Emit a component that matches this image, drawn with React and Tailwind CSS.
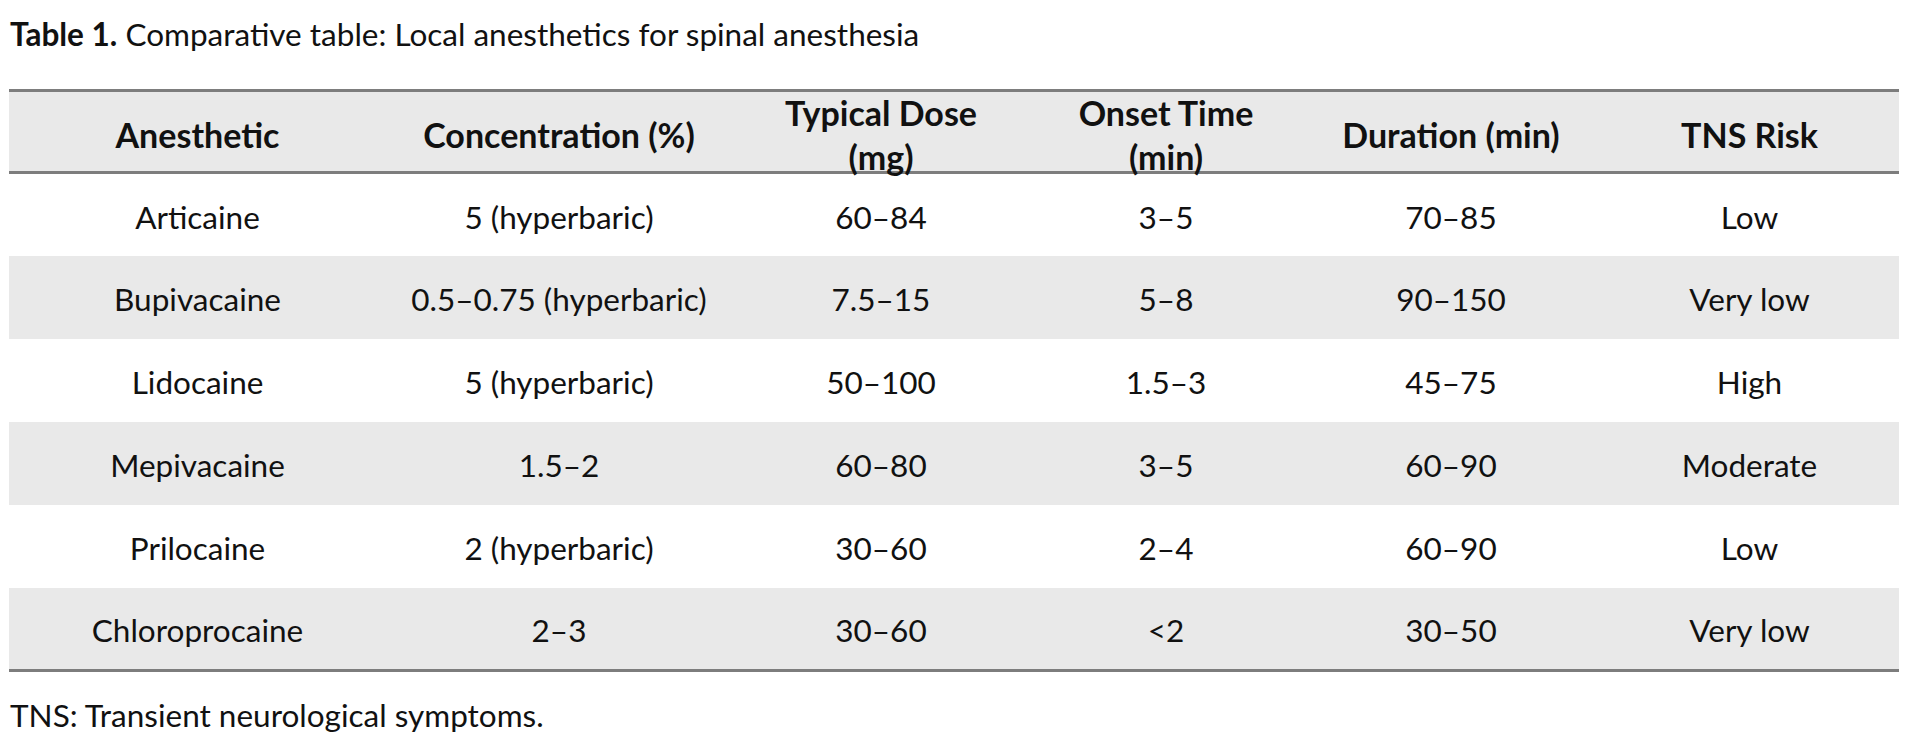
import React from "react";

const columns = [
	{ label: ["Anesthetic"], width: "w-[377px]" },
	{ label: ["Concentration (%)"], width: "w-[346px]" },
	{ label: ["Typical Dose", "(mg)"], width: "w-[298px]" },
	{ label: ["Onset Time", "(min)"], width: "w-[272px]" },
	{ label: ["Duration (min)"], width: "w-[298px]" },
	{ label: ["TNS Risk"], width: "w-[299px]" },
];

const rows = [
	["Articaine", "5 (hyperbaric)", "60–84", "3–5", "70–85", "Low"],
	["Bupivacaine", "0.5–0.75 (hyperbaric)", "7.5–15", "5–8", "90–150", "Very low"],
	["Lidocaine", "5 (hyperbaric)", "50–100", "1.5–3", "45–75", "High"],
	["Mepivacaine", "1.5–2", "60–80", "3–5", "60–90", "Moderate"],
	["Prilocaine", "2 (hyperbaric)", "30–60", "2–4", "60–90", "Low"],
	["Chloroprocaine", "2–3", "30–60", "<2", "30–50", "Very low"],
];

export default function App() {
	return (
		<div className="w-[1917px] h-[751px] bg-white text-[#111] font-['Lato','Liberation_Sans',sans-serif] overflow-hidden">
			{/* caption */}
			<p className="pl-[10px] pt-[16px] text-[31.5px] leading-[36px]">
				<span className="font-bold">Table 1.</span> Comparative table: Local
				anesthetics for spinal anesthesia
			</p>

			<table className="ml-[9px] mt-[37px] w-[1890px] table-fixed border-collapse">
				<colgroup>
					{columns.map((col, i) => (
						<col key={i} className={col.width} />
					))}
				</colgroup>
				<thead>
					<tr className="bg-[#e9e9e9] border-y-[3px] border-[#7d7d7d]">
						{columns.map((col, i) => (
							<th key={i} className="p-0 text-center font-bold text-[34px] leading-[44px]">
								<div className="h-[79px] pt-[6px] flex flex-col items-center justify-center">
									{col.label.map((line, j) => (
										<div key={j} className="h-[44px] shrink-0">
											{line}
										</div>
									))}
								</div>
							</th>
						))}
					</tr>
				</thead>
				<tbody className="border-b-[3px] border-[#7d7d7d]">
					{rows.map((row, r) => (
						<tr key={r} className={`h-[83px] ${r % 2 === 1 ? "bg-[#e9e9e9]" : "bg-white"}`}>
							{row.map((cell, c) => (
								<td key={c} className="p-0 pt-[5px] text-center align-middle text-[31.5px]">
									{cell}
								</td>
							))}
						</tr>
					))}
				</tbody>
			</table>

			{/* footnote */}
			<p className="pl-[10px] pt-[25px] text-[31.5px] leading-[36px]">
				TNS: Transient neurological symptoms.
			</p>
		</div>
	);
}
